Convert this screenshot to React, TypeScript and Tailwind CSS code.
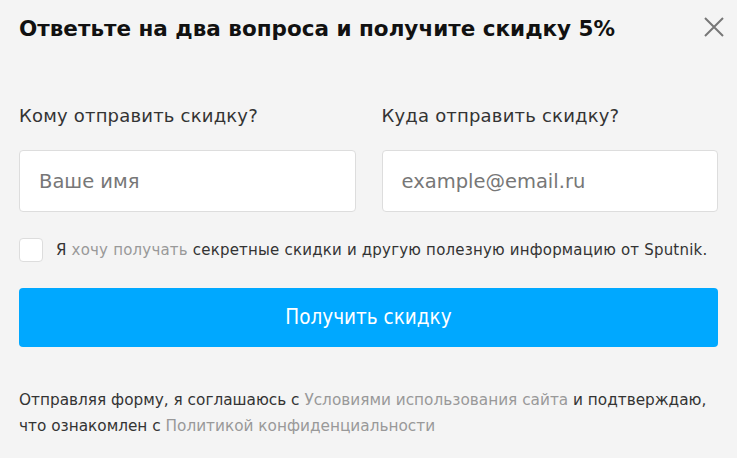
export default function App() {
  return (
    <div className="min-h-[458px] w-[737px] bg-[#f4f4f4] px-[19px] pt-[14px] font-['DejaVu_Sans',sans-serif] text-[#333]">
      <div className="flex items-start justify-between">
        <h1 className="text-[21.5px] font-bold leading-[30px] text-[#111]">
          Ответьте на два вопроса и получите скидку 5%
        </h1>
        <button className="mr-[-6px] mt-[3px] text-[#777]" aria-label="Закрыть">
          <svg width="20" height="20" viewBox="0 0 20 20" fill="none" stroke="currentColor" strokeWidth="2">
            <path d="M1 1l18 18M19 1L1 19" />
          </svg>
        </button>
      </div>

      <div className="mt-[60px] grid grid-cols-2 gap-[26px]">
        <div>
          <div className="text-[18px] leading-[24px] tracking-[0.2px]">Кому отправить скидку?</div>
          <input
            className="mt-[22px] h-[62px] w-full rounded-[4px] border border-[#ddd] bg-white px-[19px] text-[19.5px] outline-none placeholder:text-[#777]"
            placeholder="Ваше имя"
          />
        </div>
        <div>
          <div className="text-[18px] leading-[24px] tracking-[0.2px]">Куда отправить скидку?</div>
          <input
            className="mt-[22px] h-[62px] w-full rounded-[4px] border border-[#ddd] bg-white px-[19px] text-[19.5px] outline-none placeholder:text-[#777]"
            placeholder="example@email.ru"
          />
        </div>
      </div>

      <label className="mt-[26px] flex items-center gap-[13px] text-[15px] tracking-[0.2px]">
        <span className="h-[24px] w-[24px] shrink-0 rounded-[4px] border border-[#ddd] bg-white" />
        <span>
          Я <span className="text-[#999]">хочу получать</span> секретные скидки и другую полезную информацию от Sputnik.
        </span>
      </label>

      <button className="mt-[26px] h-[59px] w-full rounded-[4px] bg-[#00a8ff] text-[20.5px] text-white font-stretch-condensed">
        Получить скидку
      </button>

      <p className="mt-[40px] whitespace-nowrap text-[15.3px] leading-[26px]">
        Отправляя форму, я соглашаюсь с <span className="text-[#999]">Условиями использования сайта</span> и подтверждаю,
        <br />
        что ознакомлен с <span className="text-[#999]">Политикой конфиденциальности</span>
      </p>
    </div>
  );
}
